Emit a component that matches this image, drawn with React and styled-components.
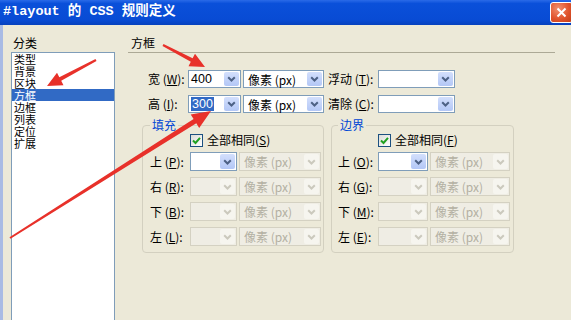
import React from 'react';
import styled, { createGlobalStyle } from 'styled-components';

const GlobalStyle = createGlobalStyle`
  html, body { margin: 0; padding: 0; }
  body {
    background: #ECE9D8;
    overflow: hidden;
    font-family: "Noto Sans CJK SC", "Noto Sans", sans-serif;
    font-size: 12px;
    color: #000;
  }
`;

const Window = styled.div`
  position: relative;
  width: 571px;
  height: 320px;
  overflow: hidden;
  display: flex;
  flex-direction: column;
  background: #ECE9D8;
`;

const TitleBar = styled.div`
  height: 25px;
  flex: none;
  box-sizing: border-box;
  display: flex;
  align-items: center;
  justify-content: space-between;
  padding-left: 3px;
  background: linear-gradient(#2A6AE8 0%, #0A50DA 14%, #084BD4 80%, #0641BD 100%);
`;

const Title = styled.div`
  color: #fff;
  font-weight: bold;
  font-size: 13.5px;
  line-height: 1;
  white-space: pre;
  font-family: "Liberation Mono", "Noto Sans CJK SC", monospace;
  margin-top: -1px;
`;

const CloseButton = styled.div`
  width: 23px;
  height: 21px;
  margin-right: -2px;
  box-sizing: border-box;
  border: 1px solid #fff;
  border-radius: 3px;
  background: radial-gradient(circle at 35% 30%, #F29070, #E0532C 55%, #C23C17);
  display: flex;
  align-items: center;
  justify-content: center;
`;

const Body = styled.div`
  flex: 1;
  min-height: 0;
  display: flex;
  border-left: 3px solid #A9BBE4;
`;

const Sidebar = styled.div`
  flex: none;
  width: 104px;
  padding-left: 8px;
  display: flex;
  flex-direction: column;
`;

const SectionLabel = styled.div`
  line-height: 14px;
  margin-top: 11px;
  padding-left: 2px;
`;

const ListBox = styled.div`
  margin-top: 2px;
  flex: 1;
  background: #fff;
  border: 1px solid #7F9DB9;
  border-bottom: none;
`;

const ListItem = styled.div`
  height: 12px;
  line-height: 12px;
  font-size: 11px;
  padding-left: 2px;
  white-space: nowrap;
  background: ${p => (p.$selected ? '#316AC5' : 'transparent')};
  color: ${p => (p.$selected ? '#fff' : '#000')};
`;

const Main = styled.div`
  flex: none;
  width: 427px;
  margin-left: 13px;
  padding-top: 11px;
  display: flex;
  flex-direction: column;
`;

const Header = styled.div`
  height: 16px;
  line-height: 14px;
  padding-left: 3px;
  border-bottom: 1px solid #ACA996;
`;

const FormRow = styled.div`
  display: flex;
  align-items: center;
  height: ${p => p.$h || 18}px;
  margin-top: ${p => p.$mt || 0}px;
  padding-left: ${p => p.$pl || 0}px;
`;

const Label = styled.div`
  width: ${p => p.$w}px;
  margin-left: ${p => p.$ml || 0}px;
  flex: none;
  white-space: nowrap;
  line-height: 14px;
`;

const Mn = styled.span`
  text-decoration: underline;
`;

const Combo = styled.div`
  width: ${p => p.$w}px;
  margin-left: ${p => p.$ml || 0}px;
  height: 100%;
  flex: none;
  box-sizing: border-box;
  border: 1px solid ${p => (p.$disabled ? '#D4D1C2' : '#7F9DB9')};
  background: ${p => (p.$disabled ? '#EFEDE4' : '#fff')};
  display: flex;
  align-items: stretch;
`;

const ComboText = styled.div`
  flex: 1;
  min-width: 0;
  padding-left: ${p => (p.$num ? 2 : 4)}px;
  display: flex;
  align-items: center;
  white-space: nowrap;
  color: ${p => (p.$disabled ? '#B3B0A2' : '#000')};
  font-family: ${p => (p.$num ? '"Liberation Sans", Arial, sans-serif' : 'inherit')};
  font-size: ${p => (p.$num ? '12.5px' : '12px')};
`;

const Selected = styled.span`
  background: #316AC5;
  color: #fff;
  line-height: 14px;
  padding: 0 1px;
`;

const ComboButton = styled.div`
  width: 15px;
  margin: 1px;
  flex: none;
  border-radius: 2px;
  background: ${p => (p.$disabled ? '#F6F5EF' : 'linear-gradient(#D3DFFC, #B3C7F6)')};
  display: flex;
  align-items: center;
  justify-content: center;
`;

const Groups = styled.div`
  display: flex;
  gap: 7px;
  margin-top: 5px;
  padding-left: 14px;
`;

const Group = styled.fieldset`
  width: ${p => p.$w}px;
  box-sizing: border-box;
  min-width: 0;
  margin: 0;
  padding: 0 2px 6px ${p => p.$pl}px;
  border: 1px solid #D3D0C0;
  border-radius: 4px;
`;

const Legend = styled.legend`
  padding: 0 2px;
  line-height: 14px;
  font-size: 12px;
  color: #0046D5;
`;

const CheckRow = styled.div`
  display: flex;
  align-items: center;
  gap: 4px;
  height: 14px;
  margin-top: 1px;
  padding-left: ${p => p.$pl}px;
  line-height: 14px;
`;

const CheckBox = styled.div`
  width: 13px;
  height: 13px;
  box-sizing: border-box;
  border: 1px solid #1C5180;
  background: linear-gradient(135deg, #DCDCD7, #fff);
  display: flex;
  align-items: center;
  justify-content: center;
`;

const Overlay = styled.svg`
  position: absolute;
  left: 0;
  top: 0;
  width: 571px;
  height: 320px;
  pointer-events: none;
`;

const Chevron = ({ disabled }) => (
  <svg width="9" height="6" viewBox="0 0 9 6">
    <path d="M1.2 1.2 L4.5 4.5 L7.8 1.2" fill="none" stroke={disabled ? '#CBC9BD' : '#4D6185'} strokeWidth="2" />
  </svg>
);

const ComboBox = ({ w, ml, disabled, num, children }) => (
  <Combo $w={w} $ml={ml} $disabled={disabled}>
    <ComboText $disabled={disabled} $num={num}>{children}</ComboText>
    <ComboButton $disabled={disabled}>
      <Chevron disabled={disabled} />
    </ComboButton>
  </Combo>
);

const arrowPoints = ([x1, y1], [x2, y2], tailW, shaftW, headL, headW) => {
  const dx = x2 - x1;
  const dy = y2 - y1;
  const len = Math.hypot(dx, dy);
  const ux = dx / len;
  const uy = dy / len;
  const nx = -uy;
  const ny = ux;
  const bx = x2 - ux * headL;
  const by = y2 - uy * headL;
  const pts = [
    [x1 + (nx * tailW) / 2, y1 + (ny * tailW) / 2],
    [bx + (nx * shaftW) / 2, by + (ny * shaftW) / 2],
    [bx + (nx * headW) / 2, by + (ny * headW) / 2],
    [x2, y2],
    [bx - (nx * headW) / 2, by - (ny * headW) / 2],
    [bx - (nx * shaftW) / 2, by - (ny * shaftW) / 2],
    [x1 - (nx * tailW) / 2, y1 - (ny * tailW) / 2],
  ];
  return pts.map(p => p.map(v => v.toFixed(1)).join(',')).join(' ');
};

const categories = ['类型', '背景', '区块', '方框', '边框', '列表', '定位', '扩展'];

const sides = [
  { name: '上', pad: 'P', mar: 'O' },
  { name: '右', pad: 'R', mar: 'G' },
  { name: '下', pad: 'B', mar: 'M' },
  { name: '左', pad: 'L', mar: 'E' },
];

const BoxGroup = ({ title, w, pl, labelW, inputW, unitW, checkKey, keyName }) => (
  <Group $w={w} $pl={pl}>
    <Legend>{title}</Legend>
    <CheckRow $pl={labelW}>
      <CheckBox>
        <svg width="9" height="9" viewBox="0 0 9 9">
          <path d="M1 4.5 L3.5 7 L8 1.8" fill="none" stroke="#21A121" strokeWidth="2" />
        </svg>
      </CheckBox>
      <span>全部相同(<Mn>{checkKey}</Mn>)</span>
    </CheckRow>
    {sides.map((s, i) => (
      <FormRow key={s.name} $h={19} $mt={i === 0 ? 5 : 6}>
        <Label $w={labelW}>
          {s.name} (<Mn>{s[keyName]}</Mn>):
        </Label>
        <ComboBox w={inputW} disabled={i !== 0} />
        <ComboBox w={unitW} ml={2} disabled>像素 (px)</ComboBox>
      </FormRow>
    ))}
  </Group>
);

export default function App() {
  return (
    <>
      <GlobalStyle />
      <Window>
        <TitleBar>
          <Title>#layout 的 CSS 规则定义</Title>
          <CloseButton>
            <svg width="11" height="11" viewBox="0 0 11 11">
              <path d="M1.5 1.5 L9.5 9.5 M9.5 1.5 L1.5 9.5" stroke="#fff" strokeWidth="2" />
            </svg>
          </CloseButton>
        </TitleBar>
        <Body>
          <Sidebar>
            <SectionLabel>分类</SectionLabel>
            <ListBox>
              {categories.map(c => (
                <ListItem key={c} $selected={c === '方框'}>{c}</ListItem>
              ))}
            </ListBox>
          </Sidebar>
          <Main>
            <Header>方框</Header>
            <FormRow $mt={17} $pl={20}>
              <Label $w={40}>宽 (<Mn>W</Mn>):</Label>
              <ComboBox w={53} num>400</ComboBox>
              <ComboBox w={81} ml={2}>像素 (px)</ComboBox>
              <Label $w={50} $ml={4}>浮动 (<Mn>T</Mn>):</Label>
              <ComboBox w={77} />
            </FormRow>
            <FormRow $mt={7} $pl={20}>
              <Label $w={40}>高 (<Mn>I</Mn>):</Label>
              <ComboBox w={53} num><Selected>300</Selected></ComboBox>
              <ComboBox w={81} ml={2}>像素 (px)</ComboBox>
              <Label $w={50} $ml={4}>清除 (<Mn>C</Mn>):</Label>
              <ComboBox w={77} />
            </FormRow>
            <Groups>
              <BoxGroup title="填充" w={182} pl={7} labelW={40} inputW={47} unitW={82} checkKey="S" keyName="pad" />
              <BoxGroup title="边界" w={183} pl={6} labelW={40} inputW={50} unitW={80} checkKey="F" keyName="mar" />
            </Groups>
          </Main>
        </Body>
        <Overlay viewBox="0 0 571 320">
          <polygon fill="#E8312A" points={arrowPoints([163, 45], [205, 67], 2, 4, 15, 14)} />
          <polygon fill="#E8312A" points={arrowPoints([96, 60], [47, 86], 2, 4, 15, 14)} />
          <polygon fill="#E8312A" points={arrowPoints([10, 238], [211, 111], 2, 5, 19, 16)} />
        </Overlay>
      </Window>
    </>
  );
}
